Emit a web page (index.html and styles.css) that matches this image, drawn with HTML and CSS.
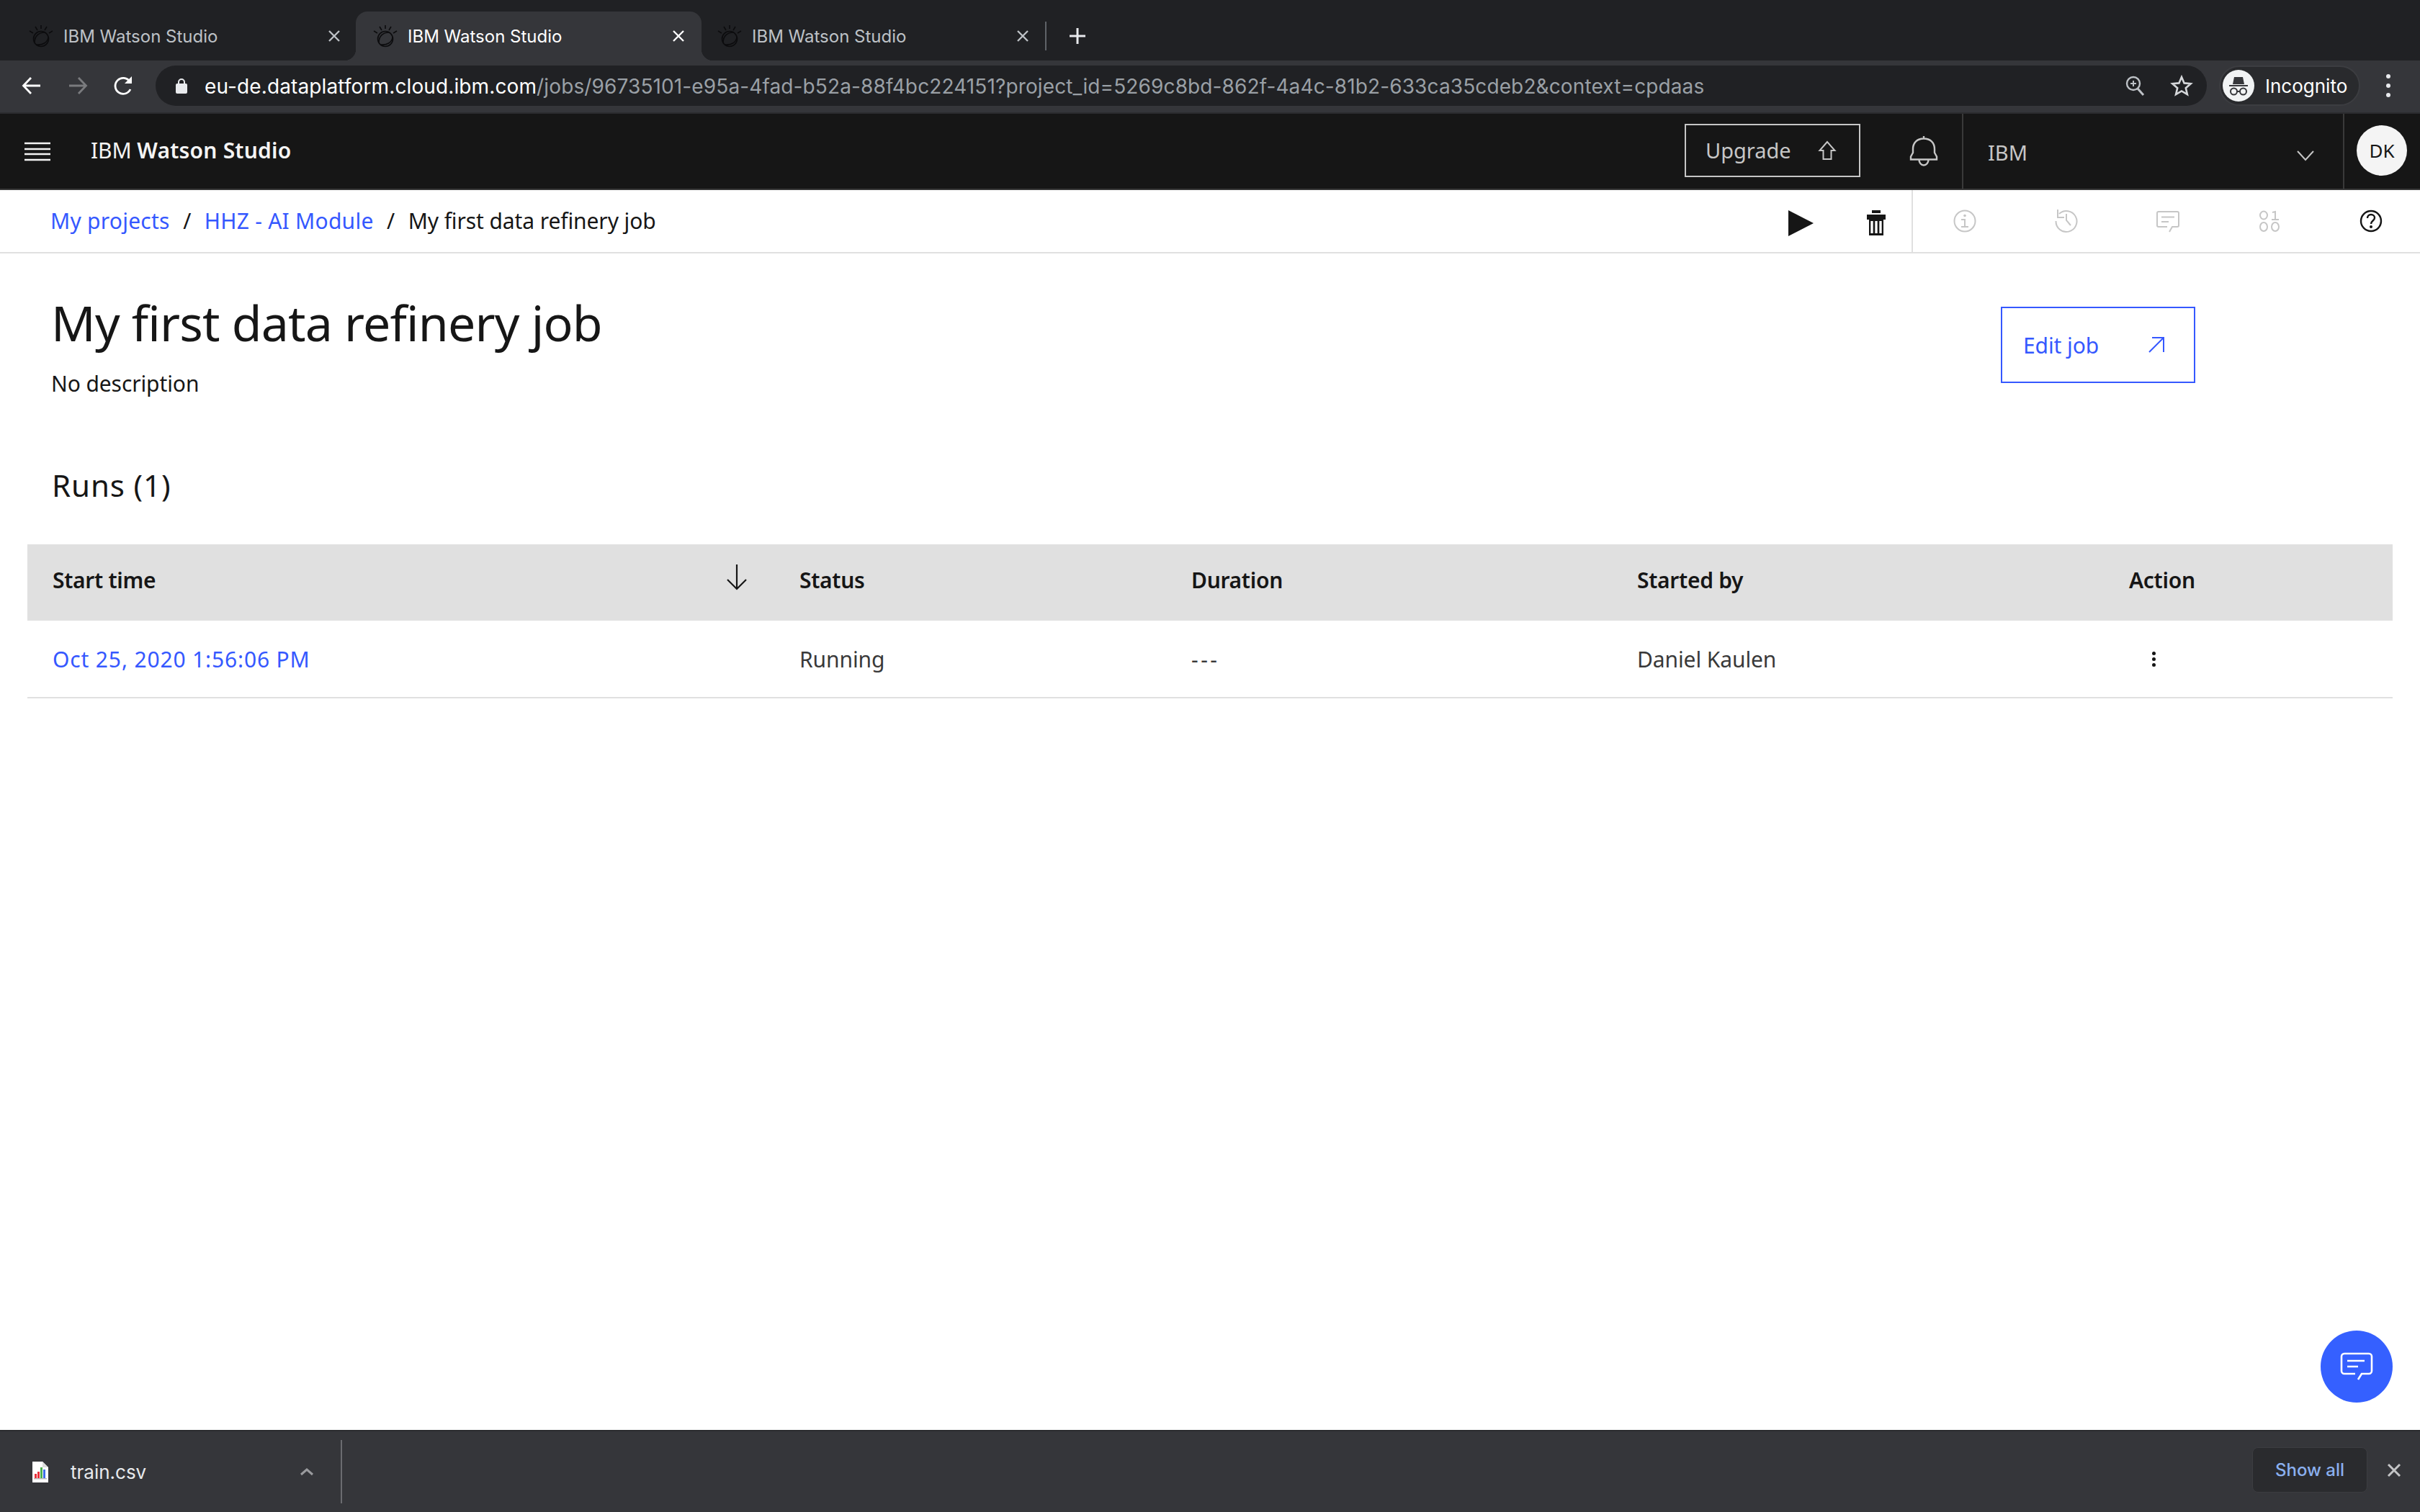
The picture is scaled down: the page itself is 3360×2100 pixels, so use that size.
FILE: index.html
```html
<!DOCTYPE html>
<html lang="en">
<head>
    <meta charset="UTF-8">
    <title>IBM Watson Studio</title>
    <link rel="stylesheet" href="styles.css">
</head>
<body>

    <!-- Browser tabs -->
    <div class="tab-strip">
        <div class="tab">
            <svg class="favicon" viewBox="0 0 34 30"><g fill="none" stroke="#0c0c0e" stroke-width="1.6"><circle cx="17" cy="19" r="10.500"/><path d="M8 24C8 15 14 10 22 10M11 27C19 28 26 24 27 17"/><path d="M17 0v5M9 2l3 5M25 2l-3 5M1 8l5 3M33 8l-5 3"/></g></svg>
            <span class="tab-title">IBM Watson Studio</span>
            <svg class="tab-close" viewBox="0 0 16 16"><path d="M1 1l14 14M15 1L1 15" stroke="#bdc1c6" stroke-width="2.4"/></svg>
        </div>
        <div class="tab tab-active">
            <svg class="favicon" viewBox="0 0 34 30"><g fill="none" stroke="#0c0c0e" stroke-width="1.6"><circle cx="17" cy="19" r="10.500"/><path d="M8 24C8 15 14 10 22 10M11 27C19 28 26 24 27 17"/><path d="M17 0v5M9 2l3 5M25 2l-3 5M1 8l5 3M33 8l-5 3"/></g></svg>
            <span class="tab-title">IBM Watson Studio</span>
            <svg class="tab-close" viewBox="0 0 16 16"><path d="M1 1l14 14M15 1L1 15" stroke="#fff" stroke-width="2.4"/></svg>
        </div>
        <div class="tab">
            <svg class="favicon" viewBox="0 0 34 30"><g fill="none" stroke="#0c0c0e" stroke-width="1.6"><circle cx="17" cy="19" r="10.500"/><path d="M8 24C8 15 14 10 22 10M11 27C19 28 26 24 27 17"/><path d="M17 0v5M9 2l3 5M25 2l-3 5M1 8l5 3M33 8l-5 3"/></g></svg>
            <span class="tab-title">IBM Watson Studio</span>
            <svg class="tab-close" viewBox="0 0 16 16"><path d="M1 1l14 14M15 1L1 15" stroke="#bdc1c6" stroke-width="2.4"/></svg>
        </div>
        <span class="tab-sep"></span>
        <svg class="tab-new" viewBox="0 0 24 24"><path d="M12 1v22M1 12h22" stroke="#e8eaed" stroke-width="3"/></svg>
    </div>

    <!-- Browser toolbar -->
    <div class="toolbar">
        <svg class="tool-icon" viewBox="0 0 28 28"><path d="M26 14H3M13 3L2.5 14 13 25" fill="none" stroke="#fff" stroke-width="2.8"/></svg>
        <svg class="tool-icon tool-muted" viewBox="0 0 28 28"><path d="M2 14h23M15 3l10.5 11L15 25" fill="none" stroke="#7a7b7e" stroke-width="2.8"/></svg>
        <svg class="tool-icon" viewBox="0 0 28 28"><path d="M23 19a11 11 0 1 1-1-11" fill="none" stroke="#fff" stroke-width="2.8"/><path d="M25 1v10H15z" fill="#fff"/></svg>
        <div class="omnibox">
            <svg class="lock" viewBox="0 0 18 22"><path d="M5 9V6a4 4 0 0 1 8 0v3" fill="none" stroke="#e8eaed" stroke-width="2"/><rect x="1" y="8" width="16" height="14" rx="2" fill="#e8eaed"/></svg>
            <span class="url"><span class="url-host">eu-de.dataplatform.cloud.ibm.com</span>/jobs/96735101-e95a-4fad-b52a-88f4bc224151?project_id=5269c8bd-862f-4a4c-81b2-633ca35cdeb2&amp;context=cpdaas</span>
            <svg class="omni-zoom" viewBox="0 0 28 28"><circle cx="12" cy="11" r="9" fill="none" stroke="#bdc1c6" stroke-width="2.4"/><path d="M18 18l8 9" stroke="#bdc1c6" stroke-width="3"/><path d="M12 7v8M8 11h8" stroke="#bdc1c6" stroke-width="2"/></svg>
            <svg class="omni-star" viewBox="0 0 30 30"><path d="M15 3l3.6 8.4 9.1.8-6.9 6 2.1 8.9-7.9-4.7-7.9 4.7 2.1-8.9-6.9-6 9.1-.8z" fill="none" stroke="#d5d7da" stroke-width="2.6"/></svg>
        </div>
        <div class="profile">
            <span class="profile-pic">
                <svg viewBox="0 0 44 44"><path d="M14 20l2-10h12l2 10zM9 21h26v2H9z" fill="#35363a"/><circle cx="15.5" cy="30" r="4.5" fill="none" stroke="#35363a" stroke-width="2"/><circle cx="28.5" cy="30" r="4.5" fill="none" stroke="#35363a" stroke-width="2"/><path d="M20 30h4" stroke="#35363a" stroke-width="2"/></svg>
            </span>
            <span class="profile-name">Incognito</span>
        </div>
        <div class="chrome-menu"><i></i><i></i><i></i></div>
    </div>

    <!-- App header -->
    <header class="app-header">
        <svg class="hamburger" viewBox="0 0 36 26"><path d="M0 2h36M0 10h36M0 17h36M0 25h36" stroke="#f4f4f4" stroke-width="2.4"/></svg>
        <div class="brand">IBM <b>Watson Studio</b></div>
        <a class="upgrade">
            <span>Upgrade</span>
            <svg viewBox="0 0 24 26"><path d="M12 1L1.500 13H6.500V25H17.500V13H22.500z" fill="none" stroke="#c6c6c6" stroke-width="2"/></svg>
        </a>
        <svg class="bell" viewBox="0 0 38 42"><path d="M19 0v3.500M4 23V18C4 9 10 3.500 19 3.500S34 9 34 18v5l3 5.500v4H1v-4zM12.500 33a6.500 7.500 0 0 0 13 0" fill="none" stroke="#c6c6c6" stroke-width="2.400"/></svg>
        <div class="account">
            <span>IBM</span>
            <svg viewBox="0 0 24 14"><path d="M1 1l11 12L23 1" fill="none" stroke="#c6c6c6" stroke-width="2"/></svg>
        </div>
        <div class="avatar-wrap"><span class="avatar">DK</span></div>
    </header>

    <!-- Breadcrumb and actions -->
    <div class="crumb-bar">
        <nav class="crumbs">
            <a>My projects</a><span class="crumb-sep">/</span><a>HHZ - AI Module</a><span class="crumb-sep">/</span><span>My first data refinery job</span>
        </nav>
        <div class="job-actions">
            <svg class="play" viewBox="0 0 35 36"><path d="M0 0l35 18L0 36z" fill="#161616"/></svg>
            <svg class="trash" viewBox="0 0 26 36"><path d="M7 0h12v4H7zM0 6h26v7H0zM3 13h20v22H3z" fill="#161616"/><path d="M7 15v17M13 15v17M19 15v17" stroke="#fff" stroke-width="3.300"/></svg>
        </div>
        <div class="side-icons">
            <svg viewBox="0 0 32 32"><g fill="none" stroke="#c6c6c6" stroke-width="2"><circle cx="16" cy="16" r="14.500"/><path d="M11 14h5v10M11 24h10"/></g><circle cx="16" cy="8.500" r="1.800" fill="#c6c6c6"/></svg>
            <svg viewBox="0 0 32 32"><g fill="none" stroke="#c6c6c6" stroke-width="2"><path d="M6 6A14.500 14.500 0 1 1 1.500 16"/><path d="M4 0v11h9M16 6v9l6 7"/></g></svg>
            <svg viewBox="0 0 32 32"><g fill="none" stroke="#c6c6c6" stroke-width="2"><path d="M15 24H3a2 2 0 0 1-2-2V5a2 2 0 0 1 2-2h26a2 2 0 0 1 2 2v17a2 2 0 0 1-2 2h-7l-4 7"/><path d="M7 10.500h18M7 17h10"/></g></svg>
            <svg viewBox="0 0 32 32"><g fill="none" stroke="#c6c6c6" stroke-width="2"><ellipse cx="8" cy="8" rx="5" ry="5.500"/><path d="M20 4l4-1v11M19 14h10"/><ellipse cx="8" cy="24" rx="5" ry="6"/><ellipse cx="24" cy="24" rx="5" ry="6"/></g></svg>
            <svg viewBox="0 0 32 32"><g fill="none" stroke="#161616" stroke-width="2.400"><circle cx="16" cy="16" r="14"/><path d="M11 12c0-3 2-5 5-5s5 2 5 4.500c0 4-5 4-5 8.500"/></g><circle cx="16" cy="24" r="2" fill="#161616"/></svg>
        </div>
    </div>

    <!-- Job page -->
    <main class="content">
        <div class="job-head">
            <div>
                <h1>My first data refinery job</h1>
                <p class="job-desc">No description</p>
            </div>
            <a class="edit-job">
                <span>Edit job</span>
                <svg viewBox="0 0 24 22"><path d="M2 21L22 1M6 1h16v20" fill="none" stroke="#3558ff" stroke-width="2"/></svg>
            </a>
        </div>
        <h2>Runs (1)</h2>

        <div class="runs-table">
            <div class="runs-row runs-head">
                <div class="cell cell-sort">
                    <span>Start time</span>
                    <svg viewBox="0 0 28 36"><path d="M14 0v34M1 21l13 13 13-13" fill="none" stroke="#161616" stroke-width="2.200"/></svg>
                </div>
                <div class="cell">Status</div>
                <div class="cell">Duration</div>
                <div class="cell">Started by</div>
                <div class="cell">Action</div>
            </div>
            <div class="runs-row runs-body">
                <div class="cell"><a>Oct 25, 2020 1:56:06 PM</a></div>
                <div class="cell">Running</div>
                <div class="cell cell-dash">---</div>
                <div class="cell">Daniel Kaulen</div>
                <div class="cell"><span class="kebab"><i></i><i></i><i></i></span></div>
            </div>
        </div>
        <button class="chat-fab">
            <svg viewBox="0 0 44 38"><path d="M20 29H5a4 4 0 0 1-4-4V5a4 4 0 0 1 4-4h34a4 4 0 0 1 4 4v20a4 4 0 0 1-4 4H29l-5 8" fill="none" stroke="#fff" stroke-width="2.600"/><path d="M9 11h24M9 19h15" stroke="#fff" stroke-width="2.600"/></svg>
        </button>
    </main>

    <!-- Downloads bar -->
    <footer class="download-bar">
        <svg class="file-icon" viewBox="0 0 22 29"><path d="M0 0h14l8 8v21H0z" fill="#fff"/><path d="M14 0l8 8h-8z" fill="#ddd"/><rect x="3" y="17" width="3" height="6" fill="#e8303a"/><rect x="7" y="14" width="3" height="9" fill="#e8303a"/><rect x="11" y="8" width="3" height="15" fill="#4caf50"/><rect x="15" y="11" width="3" height="12" fill="#3d6ee8"/><rect x="2" y="23" width="18" height="1.500" fill="#bbb"/></svg>
        <span class="file-name">train.csv</span>
        <svg class="file-caret" viewBox="0 0 20 12"><path d="M2 10l8-7 8 7" fill="none" stroke="#9a9b9e" stroke-width="3"/></svg>
        <span class="file-sep"></span>
        <a class="show-all">Show all</a>
        <svg class="bar-close" viewBox="0 0 20 20"><path d="M2 2l16 16M18 2L2 18" stroke="#c4c5c7" stroke-width="3"/></svg>
    </footer>

</body>
</html>
```

FILE: styles.css
```css
/* General Reset */
* {
    box-sizing: border-box;
}
html, body {
    margin: 0;
    height: 2100px;
}
body {
    display: flex;
    flex-direction: column;
    overflow: hidden;
    font-family: "Noto Sans", Roboto, sans-serif;
    background-color: #fff;
    color: #161616;
}
svg {
    display: block;
    flex: none;
    overflow: visible;
}

/* Browser tabs */
.tab-strip {
    display: flex;
    align-items: flex-end;
    height: 84px;
    padding-left: 16px;
    background-color: #202124;
}
.tab {
    position: relative;
    display: flex;
    align-items: center;
    width: 478px;
    height: 68px;
    padding: 0 24px 0 24px;
    color: #bdc1c6;
}
.tab-active {
    width: 480px;
    margin-right: -2px;
    padding-right: 26px;
    background-color: #35363a;
    border-radius: 16px 16px 0 0;
    color: #fff;
}
.tab-active::before, .tab-active::after {
    content: "";
    position: absolute;
    bottom: 0;
    width: 16px;
    height: 16px;
}
.tab-active::before {
    left: -16px;
    background: radial-gradient(circle at 0 0, transparent 16px, #35363a 16.5px);
}
.tab-active::after {
    right: -16px;
    background: radial-gradient(circle at 100% 0, transparent 16px, #35363a 16.5px);
}
.favicon {
    width: 34px;
    height: 30px;
    margin-right: 14px;
}
.tab-title {
    flex: 1;
    font-family: Inter, sans-serif;
    font-size: 24px;
}
.tab-close {
    width: 16px;
    height: 16px;
    margin-right: -2px;
}
.tab-sep {
    width: 2px;
    height: 40px;
    margin: 0 0 14px 1px;
    background-color: #5f6368;
}
.tab-new {
    width: 24px;
    height: 24px;
    margin: 0 0 22px 31px;
}

/* Browser toolbar */
.toolbar {
    display: flex;
    align-items: center;
    height: 74px;
    padding: 0 0 2px 30px;
    background-color: #35363a;
    border-bottom: 2px solid #2b2c2f;
}
.tool-icon {
    width: 28px;
    height: 28px;
    margin-right: 36px;
}
.omnibox {
    display: flex;
    align-items: center;
    width: 2848px;
    height: 56px;
    margin-left: -6px;
    padding: 0 20px 0 27px;
    border-radius: 28px;
    background-color: #202124;
}
.lock {
    width: 18px;
    height: 22px;
    margin-right: 23px;
}
.url {
    flex: 1;
    padding-top: 1px;
    font-family: Inter, sans-serif;
    font-size: 28px;
    letter-spacing: 0.12px;
    color: #9aa0a6;
    white-space: nowrap;
}
.url-host {
    color: #fff;
}
.omni-zoom {
    width: 28px;
    height: 28px;
    margin-right: 36px;
}
.omni-star {
    width: 30px;
    height: 30px;
}
.profile {
    display: flex;
    align-items: center;
    width: 196px;
    height: 56px;
    margin-left: 17px;
    padding-left: 3px;
    border: 2px solid #3c3d41;
    border-radius: 28px;
    background-color: #292a2d;
}
.profile-pic {
    width: 44px;
    height: 44px;
    border-radius: 50%;
    background-color: #f1f3f4;
}
.profile-name {
    margin-left: 15px;
    font-family: Inter, sans-serif;
    font-size: 26px;
    color: #fff;
}
.chrome-menu {
    display: flex;
    flex-direction: column;
    gap: 7px;
    margin-left: 36px;
}
.chrome-menu i {
    width: 6px;
    height: 6px;
    border-radius: 50%;
    background-color: #e8eaed;
}

/* App header */
.app-header {
    display: flex;
    align-items: stretch;
    height: 106px;
    background-color: #161616;
    border-bottom: 2px solid #393939;
    color: #f4f4f4;
}
.hamburger {
    width: 36px;
    height: 26px;
    margin: 39px 56px 0 34px;
}
.brand {
    flex: 1;
    padding-top: 30px;
    font-size: 30px;
    letter-spacing: -0.1px;
}
.brand b {
    font-weight: 600;
    letter-spacing: 0.2px;
}
.upgrade {
    display: flex;
    align-items: center;
    justify-content: space-between;
    width: 244px;
    height: 74px;
    margin-top: 14px;
    padding: 0 32px 0 27px;
    border: 2px solid #c6c6c6;
    font-size: 29px;
    color: #c6c6c6;
}
.upgrade span {
    margin-bottom: 1px;
}
.upgrade svg {
    width: 24px;
    height: 26px;
}
.bell {
    width: 38px;
    height: 42px;
    margin: 31px 34px 0 69px;
}
.account {
    display: flex;
    justify-content: space-between;
    width: 531px;
    padding: 0 40px 0 34px;
    border-left: 2px solid #393939;
    border-right: 2px solid #393939;
    font-size: 29px;
    color: #c6c6c6;
}
.account span {
    padding-top: 34px;
}
.account svg {
    width: 24px;
    height: 14px;
    margin-top: 51px;
}
.avatar-wrap {
    padding: 16px 18px 0 17px;
}
.avatar {
    display: flex;
    align-items: center;
    justify-content: center;
    width: 70px;
    height: 70px;
    border-radius: 50%;
    background-color: #f4f4f4;
    font-size: 26px;
    color: #161616;
}

/* Breadcrumb and actions */
.crumb-bar {
    display: flex;
    align-items: stretch;
    height: 88px;
    border-bottom: 2px solid #e0e0e0;
}
.crumbs {
    flex: 1;
    padding: 22px 0 0 70px;
    font-size: 30px;
    letter-spacing: -0.1px;
}
.crumbs a {
    letter-spacing: 0.25px;
    color: #3558ff;
}
.crumb-sep {
    margin: 0 18.5px;
}
.job-actions {
    display: flex;
    align-items: center;
    gap: 74px;
    padding-top: 6px;
    padding-right: 36px;
    border-right: 2px solid #e0e0e0;
}
.play {
    width: 35px;
    height: 36px;
}
.trash {
    width: 26px;
    height: 36px;
}
.side-icons {
    display: flex;
    align-items: center;
    gap: 109px;
    width: 704px;
    padding-left: 56px;
}
.side-icons svg {
    width: 32px;
    height: 32px;
}

/* Job page */
.content {
    position: relative;
    flex: 1;
    padding-left: 38px;
    padding-right: 38px;
}
.job-head {
    display: flex;
    justify-content: space-between;
    padding: 50px 274px 0 33px;
}
h1 {
    margin: 0;
    font-size: 68px;
    font-weight: 400;
    letter-spacing: -0.8px;
    line-height: 92px;
}
.job-desc {
    margin: 17px 0 0;
    font-size: 30px;
    letter-spacing: -0.1px;
    line-height: 44px;
}
.edit-job {
    display: flex;
    align-items: center;
    justify-content: space-between;
    width: 270px;
    height: 106px;
    margin-top: 24px;
    padding: 0 40px 0 29px;
    border: 2px solid #3558ff;
    font-size: 30px;
    letter-spacing: -0.1px;
    color: #3558ff;
}
.edit-job svg {
    width: 24px;
    height: 22px;
}
h2 {
    margin: 89px 0 0 34px;
    font-size: 42px;
    font-weight: 400;
    letter-spacing: 0.9px;
    line-height: 60px;
}
.runs-table {
    margin-top: 52px;
    font-size: 30px;
}
.runs-row {
    display: grid;
    grid-template-columns: 1037px 544px 619px 683px 401px;
    align-items: center;
}
.runs-head {
    height: 106px;
    padding-bottom: 8px;
    background-color: #e0e0e0;
    font-size: 30px;
    font-weight: 600;
    letter-spacing: -0.3px;
}
.runs-body {
    height: 108px;
    border-bottom: 2px solid #e0e0e0;
    letter-spacing: -0.1px;
    color: #393939;
}
.runs-body a {
    letter-spacing: 0.85px;
    color: #3558ff;
}
.cell {
    padding-left: 35px;
}
.cell-dash {
    letter-spacing: 3.5px;
}
.cell-sort {
    display: flex;
    align-items: center;
    justify-content: space-between;
    padding-right: 38px;
}
.cell-sort svg {
    width: 28px;
    height: 36px;
    margin-top: -6px;
}
.kebab {
    display: flex;
    flex-direction: column;
    gap: 3px;
    width: 5px;
    margin-left: 32px;
}
.kebab i {
    width: 5px;
    height: 5px;
    border-radius: 50%;
    background-color: #161616;
}
.chat-fab {
    position: absolute;
    right: 38px;
    bottom: 38px;
    display: flex;
    align-items: center;
    justify-content: center;
    width: 100px;
    height: 100px;
    border: none;
    border-radius: 50%;
    background-color: #3560ff;
}
.chat-fab svg {
    width: 44px;
    height: 38px;
}

/* Downloads bar */
.download-bar {
    display: flex;
    align-items: center;
    height: 114px;
    padding-left: 45px;
    border-top: 2px solid #2b2c2f;
    background-color: #35363a;
}
.file-icon {
    width: 22px;
    height: 29px;
    margin-right: 31px;
}
.file-name {
    width: 318px;
    font-family: Inter, sans-serif;
    font-size: 26px;
    color: #e8eaed;
}
.file-caret {
    width: 20px;
    height: 12px;
}
.file-sep {
    width: 2px;
    height: 88px;
    margin-left: 37px;
    background-color: #6b6c70;
}
.show-all {
    display: flex;
    align-items: center;
    justify-content: center;
    width: 160px;
    height: 63px;
    margin-left: auto;
    margin-bottom: 5px;
    border: 1px solid #3c3d41;
    border-radius: 8px;
    background-color: #2a2b2e;
    font-family: Inter, sans-serif;
    font-size: 24px;
    font-weight: 500;
    color: #8ab0ef;
}
.bar-close {
    width: 20px;
    height: 20px;
    margin: 0 26px 4px 27px;
}
```
